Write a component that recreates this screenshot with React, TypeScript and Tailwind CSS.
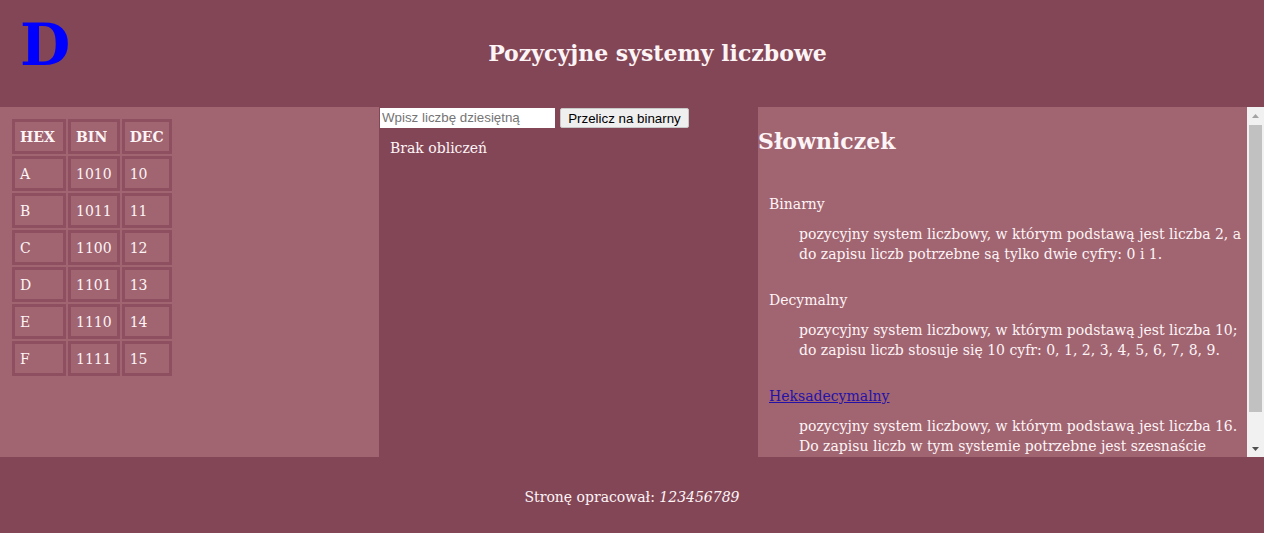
import React from "react";

const serif = { fontFamily: '"DejaVu Serif", Georgia, serif' };

const rows = [
  ["A", "1010", "10"],
  ["B", "1011", "11"],
  ["C", "1100", "12"],
  ["D", "1101", "13"],
  ["E", "1110", "14"],
  ["F", "1111", "15"],
];

const cell = "border-[3px] border-[#8e4f61] h-[35px] px-[5px] align-middle text-left";

export default function App() {
  return (
    <div className="w-[1264px] h-[533px] overflow-hidden bg-[#834656] text-[#fdf4f6] text-[14px] leading-[20px]" style={serif}>
      <header className="h-[107px] flex items-start">
        <div className="w-[51px] pl-[20px] pt-[15px] text-[58px] leading-[60px] font-bold text-[#0000ff] whitespace-nowrap">D</div>
        <h1 className="flex-1 text-center text-[22px] font-bold pt-[39px] leading-[28px]">Pozycyjne systemy liczbowe</h1>
      </header>
      <main className="flex h-[350px]">
        <section className="w-[379px] bg-[#a16471] pt-[10px] pl-[10px]">
          <table className="border-separate border-spacing-[2px]">
            <thead>
              <tr>
                <th className={cell + " w-[54px] font-bold"}>HEX</th>
                <th className={cell + " w-[49px] font-bold"}>BIN</th>
                <th className={cell + " w-[50px] font-bold"}>DEC</th>
              </tr>
            </thead>
            <tbody>
              {rows.map((r) => (
                <tr key={r[0]}>
                  <td className={cell}>{r[0]}</td>
                  <td className={cell}>{r[1]}</td>
                  <td className={cell}>{r[2]}</td>
                </tr>
              ))}
            </tbody>
          </table>
        </section>
        <section className="w-[379px] pl-[1px] pt-[1px]">
          <div className="flex items-center gap-[5px]" style={{ fontFamily: '"Liberation Sans", Arial, sans-serif' }}>
            <input
              className="w-[175px] h-[20px] bg-white px-[2px] text-[13.33px] text-black placeholder:text-[#757575] outline-none"
              placeholder="Wpisz liczbę dziesiętną"
            />
            <button className="h-[20px] w-[129px] bg-[#efefef] border border-[#c8c8c8] rounded-[2px] text-[13.33px] text-black">
              Przelicz na binarny
            </button>
          </div>
          <p className="pl-[10px] pt-[10px]">Brak obliczeń</p>
        </section>
        <section className="flex-1 bg-[#a16471] flex">
          <div className="flex-1 overflow-hidden">
            <h2 className="text-[22px] font-bold leading-[28px] pt-[20px]">Słowniczek</h2>
            <dl className="pl-[11px] pt-[39px]">
              <dt>Binarny</dt>
              <dd className="pl-[30px] pt-[10px] pb-[26px]">
                pozycyjny system liczbowy, w którym podstawą jest liczba 2, a do zapisu liczb potrzebne są tylko dwie cyfry: 0 i 1.
              </dd>
              <dt>Decymalny</dt>
              <dd className="pl-[30px] pt-[10px] pb-[26px]">
                pozycyjny system liczbowy, w którym podstawą jest liczba 10; do zapisu liczb stosuje się 10 cyfr: 0, 1, 2, 3, 4, 5, 6, 7, 8, 9.
              </dd>
              <dt>
                <a href="#" className="underline text-[#2412a8]">Heksadecymalny</a>
              </dt>
              <dd className="pl-[30px] pt-[10px] pb-[26px]">
                pozycyjny system liczbowy, w którym podstawą jest liczba 16. Do zapisu liczb w tym systemie potrzebne jest szesnaście
              </dd>
            </dl>
          </div>
          <div className="w-[17px] bg-[#f1f1f1] flex flex-col">
            <div className="h-[17px] flex items-center justify-center">
              <svg width="7" height="4" viewBox="0 0 7 4"><path d="M3.5 0 L7 4 L0 4 Z" fill="#a3a3a3" /></svg>
            </div>
            <div className="mx-[2px] mt-[1px] h-[287px] bg-[#c1c1c1]" />
            <div className="flex-1" />
            <div className="h-[17px] flex items-center justify-center">
              <svg width="7" height="4" viewBox="0 0 7 4"><path d="M0 0 L7 0 L3.5 4 Z" fill="#505050" /></svg>
            </div>
          </div>
        </section>
      </main>
      <footer className="h-[76px] flex items-center justify-center pt-[4px]">
        <p>
          Stronę opracował: <i>123456789</i>
        </p>
      </footer>
    </div>
  );
}
